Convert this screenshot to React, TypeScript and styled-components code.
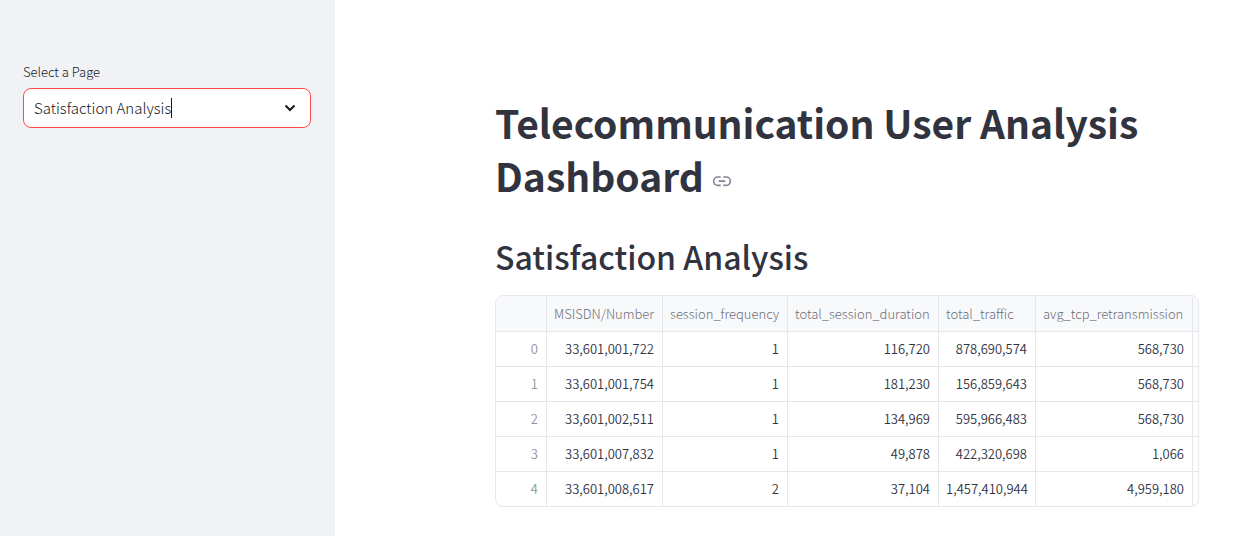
import React from "react";
import styled, { createGlobalStyle } from "styled-components";

const GlobalStyle = createGlobalStyle`
  *, *::before, *::after { box-sizing: border-box; }
  body {
    margin: 0;
    background: #ffffff;
    color: #31333f;
    font-family: "Source Sans Pro", "Noto Sans CJK SC", sans-serif;
    font-weight: 300;
  }
`;

const Shell = styled.div`
  display: flex;
  min-height: 100vh;
`;

const Sidebar = styled.aside`
  flex: 0 0 335px;
  padding: 62px 24px 24px 23px;
  background: #f0f2f6;
  color: #161823;
`;

const FieldLabel = styled.label`
  display: block;
  margin-bottom: 6px;
  font-size: 13px;
  line-height: 20px;
`;

const SelectBox = styled.div`
  display: flex;
  align-items: center;
  height: 40px;
  padding: 0 12px 0 10px;
  border: 1px solid #ff4b4b;
  border-radius: 8px;
  background: #ffffff;
`;

const Select = styled.select`
  appearance: none;
  field-sizing: content;
  padding: 0;
  border: 0;
  outline: 0;
  background: transparent;
  color: inherit;
  font-family: inherit;
  font-size: 15px;
  font-weight: inherit;
  line-height: 24px;
`;

const Caret = styled.span`
  width: 1px;
  height: 20px;
  background: currentColor;
`;

const Chevron = styled.svg`
  width: 16px;
  height: 16px;
  margin-left: auto;
  fill: none;
  stroke: currentColor;
  stroke-width: 2;
`;

const Main = styled.main`
  flex: 1;
  min-width: 0;
  padding: 96px 51px 29px 160px;
`;

const Title = styled.h1`
  margin: 0;
  padding-bottom: 33px;
  font-size: 39px;
  font-weight: 700;
  line-height: 53px;
`;

const Anchor = styled.a`
  display: inline-block;
  margin-left: 8px;
  color: #808495;
  line-height: 0;
`;

const LinkIcon = styled.svg`
  width: 20px;
  height: 20px;
  fill: none;
  stroke: currentColor;
  stroke-width: 2;
`;

const Heading = styled.h2`
  margin: 0;
  padding-bottom: 17px;
  font-size: 32px;
  font-weight: 500;
  line-height: 43px;
`;

const Frame = styled.div`
  overflow: hidden;
  border: 1px solid #e6e7ea;
  border-radius: 8px;
`;

const Table = styled.table`
  width: 100%;
  table-layout: fixed;
  border-collapse: separate;
  border-spacing: 0;
  font-size: 13px;
  line-height: 20px;
  white-space: nowrap;
`;

const Col = styled.col<{ $width?: number }>`
  width: ${(p) => (p.$width ? `${p.$width}px` : "auto")};
`;

const HeadCell = styled.th`
  height: 36px;
  padding: 0 7px;
  border-right: 1px solid #e6e7ea;
  border-bottom: 1px solid #e6e7ea;
  background: #f8f9fb;
  color: #6c6e79;
  font-weight: inherit;
  text-align: left;
  &:last-child { padding: 0; border-right: 0; }
`;

const Cell = styled.td`
  height: 35px;
  padding: 0 8px 0 7px;
  border-right: 1px solid #e6e7ea;
  border-bottom: 1px solid #e6e7ea;
  font-weight: 350;
  text-align: right;
  &:last-child { padding: 0; border-right: 0; }
  tr:last-child > & { height: 34px; border-bottom: 0; }
`;

const IndexCell = styled(Cell).attrs({ as: "th", scope: "row" })`
  color: #9193a0;
`;

const columns = [
  { name: "MSISDN/Number", width: 116 },
  { name: "session_frequency", width: 125 },
  { name: "total_session_duration", width: 151 },
  { name: "total_traffic", width: 97 },
  { name: "avg_tcp_retransmission", width: 157 },
];

const rows = [
  [33601001722, 1, 116720, 878690574, 568730],
  [33601001754, 1, 181230, 156859643, 568730],
  [33601002511, 1, 134969, 595966483, 568730],
  [33601007832, 1, 49878, 422320698, 1066],
  [33601008617, 2, 37104, 1457410944, 4959180],
];

export default function App() {
  return (
    <>
      <GlobalStyle />
      <Shell>
        <Sidebar>
          <FieldLabel htmlFor="page">Select a Page</FieldLabel>
          <SelectBox>
            <Select id="page" defaultValue="Satisfaction Analysis">
              <option>Satisfaction Analysis</option>
            </Select>
            <Caret />
            <Chevron viewBox="0 0 16 16" aria-hidden="true">
              <path d="M3.500 5.500 8 10l4.500-4.500" />
            </Chevron>
          </SelectBox>
        </Sidebar>
        <Main>
          <Title id="dashboard">
            Telecommunication User Analysis Dashboard
            <Anchor href="#dashboard" aria-label="Link to heading">
              <LinkIcon viewBox="0 0 24 24" aria-hidden="true">
                <path d="M10.500 6H7a5 5 0 0 0 0 10h3.500M13.500 6H17a5 5 0 0 1 0 10h-3.500M8 11h8" />
              </LinkIcon>
            </Anchor>
          </Title>
          <Heading>Satisfaction Analysis</Heading>
          <Frame>
            <Table>
              <colgroup>
                <Col $width={51} />
                {columns.map((c) => (
                  <Col key={c.name} $width={c.width} />
                ))}
                <Col />
              </colgroup>
              <thead>
                <tr>
                  <HeadCell />
                  {columns.map((c) => (
                    <HeadCell key={c.name} scope="col">{c.name}</HeadCell>
                  ))}
                  <HeadCell />
                </tr>
              </thead>
              <tbody>
                {rows.map((row, i) => (
                  <tr key={row[0]}>
                    <IndexCell>{i}</IndexCell>
                    {row.map((value, j) => (
                      <Cell key={j}>{value.toLocaleString("en-US")}</Cell>
                    ))}
                    <Cell />
                  </tr>
                ))}
              </tbody>
            </Table>
          </Frame>
        </Main>
      </Shell>
    </>
  );
}
